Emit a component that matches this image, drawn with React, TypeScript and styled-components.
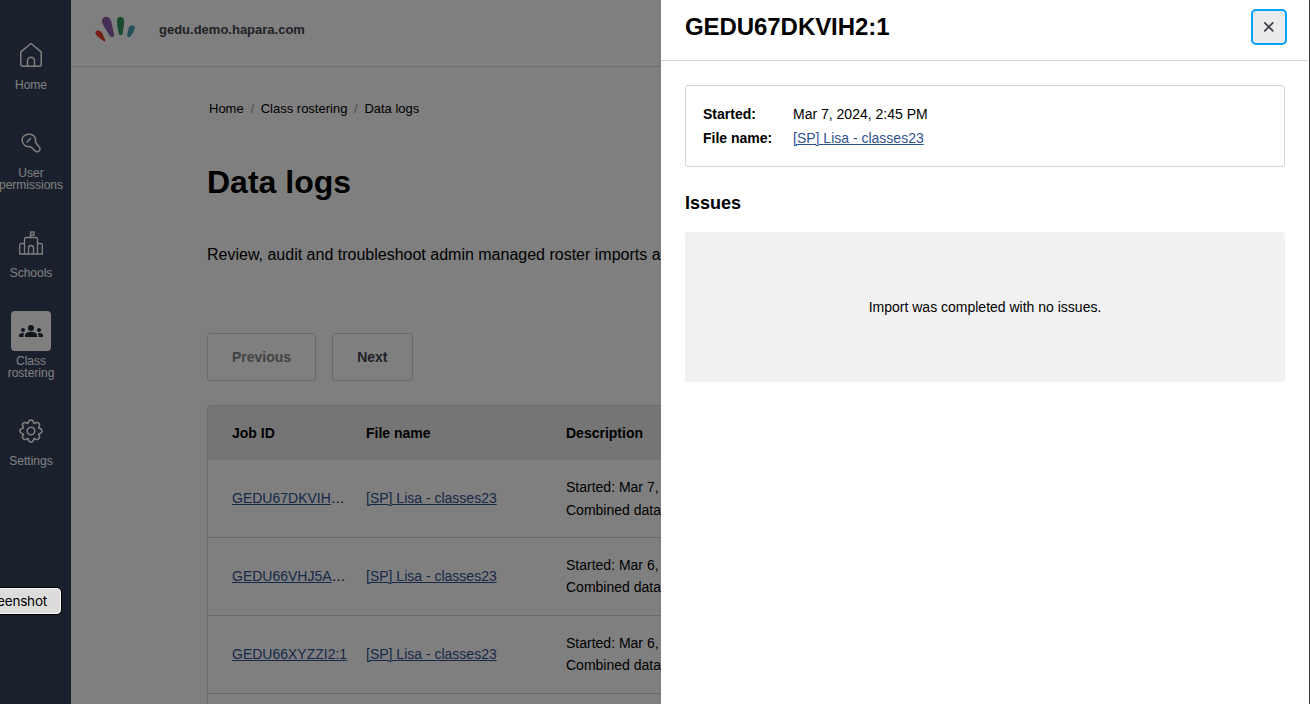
import React from "react";
import styled, { createGlobalStyle } from "styled-components";

const GlobalStyle = createGlobalStyle`
  *, *::before, *::after { box-sizing: border-box; }
  html, body { margin: 0; padding: 0; overflow: hidden; background: #fff; }
  body { font-family: "Liberation Sans", Arial, Helvetica, sans-serif; font-size: 14px; color: #000; }
  h1, h2, h3, p, ul, dl, dd { margin: 0; padding: 0; }
`;

const Page = styled.div`
  position: relative;
  display: flex;
  width: 100vw;
  height: 100vh;
  overflow: hidden;
`;

const Sidebar = styled.nav`
  flex: 0 0 80px;
  margin-left: -9px;
  padding-top: 35px;
  background: #344158;
`;

const NavItem = styled.a`
  display: flex;
  flex-direction: column;
  align-items: center;
  padding-bottom: 32px;
  color: #fff;
  font-size: 12px;
  line-height: 12px;
  text-align: center;
  text-decoration: none;
  white-space: pre-line;
`;

const NavIcon = styled.span<{ $active?: boolean }>`
  display: flex;
  align-items: center;
  justify-content: center;
  width: 40px;
  height: 40px;
  margin-bottom: 4px;
  border-radius: 4px;
  color: ${(p) => (p.$active ? "#222c38" : "#fff")};
  background: ${(p) => (p.$active ? "#fff" : "transparent")};
`;

const Main = styled.main`
  flex: 1;
  min-width: 0;
`;

const TopBar = styled.header`
  display: flex;
  align-items: center;
  height: 67px;
  padding: 0 24px 7px;
  border-bottom: 1px solid #dcdcde;
`;

const Domain = styled.span`
  margin-left: 24px;
  font-size: 13px;
  font-weight: bold;
  color: #43434f;
`;

const Content = styled.div`
  padding: 34px 0 0 136px;
  width: 1100px;
`;

const Breadcrumb = styled.ul`
  display: flex;
  list-style: none;
  padding-left: 2px;
  font-size: 13px;
  line-height: 16px;
`;

const Crumb = styled.li`
  & + &::before {
    content: "/";
    padding: 0 6.7px;
    color: #999;
  }
`;

const PageTitle = styled.h1`
  margin-top: 45px;
  font-size: 32px;
  line-height: 40px;
`;

const Intro = styled.p`
  margin-top: 41px;
  font-size: 16px;
  line-height: 24px;
  white-space: nowrap;
`;

const Pager = styled.div`
  display: flex;
  gap: 16px;
  margin-top: 66px;
`;

const PagerButton = styled.button`
  height: 48px;
  padding: 0 24px;
  border: 1px solid #d4d4d4;
  border-radius: 3px;
  background: #fff;
  color: #43434f;
  font: bold 14px "Liberation Sans", Arial, sans-serif;
  &:disabled { color: #86868c; }
`;

const Table = styled.div`
  margin-top: 24px;
  border: 1px solid #d4d4d4;
  border-radius: 3px 3px 0 0;
`;

const Row = styled.div<{ $head?: boolean }>`
  display: grid;
  grid-template-columns: 134px 200px 1fr;
  align-items: center;
  height: ${(p) => (p.$head ? "54px" : "78px")};
  padding-left: 24px;
  padding-bottom: ${(p) => (p.$head ? "0" : "1px")};
  font-weight: ${(p) => (p.$head ? "bold" : "normal")};
  background: ${(p) => (p.$head ? "#ebebeb" : "#fff")};
  border-bottom: ${(p) => (p.$head ? "0" : "1px solid #d4d4d4")};
`;

const JobCell = styled.div`
  width: 116px;
  overflow: hidden;
  text-overflow: ellipsis;
  white-space: nowrap;
  line-height: 20px;
`;

const Description = styled.div<{ $loose?: boolean }>`
  padding-top: ${(p) => (p.$loose ? "2px" : "0")};
  line-height: ${(p) => (p.$loose ? "23px" : "22px")};
`;

const Link = styled.a`
  color: #305291;
  text-decoration: underline;
  text-underline-offset: 1px;
  text-decoration-thickness: 1px;
`;

const Overlay = styled.div`
  position: absolute;
  inset: 0;
  background: rgba(0, 0, 0, 0.5);
`;

const Drawer = styled.aside`
  position: absolute;
  top: 0;
  right: 0;
  bottom: 0;
  width: 649px;
  border-right: 1px solid #38393b;
  background: #fff;
`;

const DrawerHeader = styled.header`
  display: flex;
  align-items: center;
  justify-content: space-between;
  height: 61px;
  margin-right: 1px;
  padding: 0 21px 7px 24px;
  border-bottom: 1px solid #d4d4d4;
`;

const DrawerTitle = styled.h2`
  font-size: 24px;
  line-height: 32px;
  letter-spacing: -0.07px;
`;

const CloseButton = styled.button`
  display: flex;
  align-items: center;
  justify-content: center;
  width: 36px;
  height: 36px;
  padding: 0;
  border: 2px solid #05a3fa;
  border-radius: 5px;
  background: #ebebeb;
  color: #3c3c4b;
`;

const DrawerBody = styled.div`
  padding: 24px;
`;

const Summary = styled.dl`
  display: grid;
  grid-template-columns: 90px 1fr;
  align-content: start;
  height: 82px;
  padding: 16px 17px;
  border: 1px solid #d4d4d4;
  border-radius: 3px;
  line-height: 24px;
`;

const Term = styled.dt`
  font-weight: bold;
`;

const IssuesTitle = styled.h3`
  margin: 24px 0 16px;
  font-size: 18px;
  line-height: 25px;
`;

const EmptyState = styled.div`
  display: flex;
  align-items: center;
  justify-content: center;
  height: 150px;
  border-radius: 3px;
  background: #f1f1f1;
`;

const Tooltip = styled.div`
  position: absolute;
  left: -60px;
  top: 588px;
  width: 121px;
  height: 26px;
  padding-right: 13px;
  border: 1px solid #f4f4f4;
  border-radius: 4px;
  background: #dcdcdc;
  box-shadow: 0 0 0 1px #000;
  font: 13.5px/24px Inter, sans-serif;
  letter-spacing: -0.2px;
  text-align: right;
`;

const HomeIcon = () => (
  <svg width="24" height="26" viewBox="0 0 24 26" fill="none" stroke="currentColor" strokeWidth="1.5" strokeLinejoin="round" strokeLinecap="round">
    <path d="M1.8 9.8 12 1.5l10.200 8.300v12.400q0 2-2 2H3.800q-2 0-2-2Z" />
    <path d="M8.500 24v-5.200a3.500 3.500 0 0 1 7 0V24" />
  </svg>
);

const KeyIcon = () => (
  <svg width="20" height="20" viewBox="0 0 20 20" fill="none" stroke="currentColor" strokeWidth="1.5" strokeLinejoin="round" strokeLinecap="round">
    <path d="M3 3Q5 1 8 1.200 11 1 13 3q2.200 2.500 1.400 6l4.200 5.600q1 2-.5 3.400t-3.400.4L9.400 13.500q-3.600.8-6-1.500Q1 9.800 1.200 7 1 5 3 3Z" />
    <path d="M6 9 9.400 5.600" />
  </svg>
);

const SchoolIcon = () => (
  <svg width="24" height="24" viewBox="0 0 24 24" fill="none" stroke="currentColor" strokeWidth="1.300" strokeLinejoin="round">
    <path d="M5.500 23V8q0-1.500 1.500-1.500h10q1.500 0 1.500 1.500v15" />
    <path d="M5.500 12.500H2.200q-1.500 0-1.500 1.500v9h22.600V14q0-1.500-1.500-1.500h-3.300" />
    <path d="M9.500 23v-6a2.500 2.500 0 0 1 5 0v6M11.500 6.500v-5.500h3.500v3h-3.500" />
  </svg>
);

const GroupIcon = () => (
  <svg width="24" height="24" viewBox="0 0 24 24" fill="currentColor">
    <circle cx="12" cy="9" r="3" />
    <circle cx="4" cy="11" r="2" />
    <circle cx="20" cy="11" r="2" />
    <path d="M6 18v-1.600Q6 14.600 7.800 13.700 12 11.900 16.200 13.700 18 14.600 18 16.400V18Z" />
    <path d="M0 18v-1.600q0-1.300 1.300-1.900Q3 13.800 5.100 14.100 4.500 15.200 4.500 16.400V18ZM24 18v-1.600q0-1.300-1.300-1.900-1.700-.7-3.800-.4.600 1.100.6 2.300V18Z" />
  </svg>
);

// Eight rounded teeth: the radius swings between the tooth tips and the notches.
const gearOutline = Array.from({ length: 120 }, (_, i) => {
  const angle = (i / 120) * Math.PI * 2;
  const wave = Math.cos(8 * angle);
  const radius = 9.9 + 1.35 * wave - 0.3 * Math.cos(16 * angle);
  return `${(12 + radius * Math.cos(angle)).toFixed(2)},${(12 + radius * Math.sin(angle)).toFixed(2)}`;
}).join(" ");

const GearIcon = () => (
  <svg width="24" height="24" viewBox="0 0 24 24" fill="none" stroke="currentColor" strokeWidth="1.600" strokeLinejoin="round">
    <circle cx="12" cy="12" r="3.800" />
    <polygon points={gearOutline} />
  </svg>
);

const Logo = () => (
  <svg width="40" height="28" viewBox="0 0 40 28">
    <path fill="#f03e28" d="M.8 15.500C2.500 13.600 5.500 14.300 7.200 17.200l3 6.800q.4 1.900-1.500 1.200L2.700 20.500Q-.7 17.600.8 15.500Z" />
    <path fill="#8c5fa8" d="M7.200 3.800C8.500-.6 14.500-.2 16.300 5.200l2.700 13.300q.4 2.200-1.500 2.600-1.900.2-2.900-1.600L8.200 9Q6.600 6.500 7.200 3.800Z" />
    <path fill="#329764" d="M22 4.500c.3-5 6.800-5 7 0 .2 4.500-.7 9-1.300 12.700q-.5 2-2 2t-2-2C23 13 21.800 9 22 4.500Z" />
    <path fill="#48a0b5" d="M33.500 12.500c1.300-5 7.500-3.800 6.300.3-1 3-2.500 5-4.300 7.500q-1 1.200-2.300.7t-1-2Z" />
  </svg>
);

const CloseIcon = () => (
  <svg width="12" height="12" viewBox="0 0 12 12" fill="none" stroke="currentColor" strokeWidth="1.700" strokeLinecap="round">
    <path d="m1.800 1.800 8 8M9.800 1.800l-8 8" />
  </svg>
);

const navItems = [
  { label: "Home", icon: <HomeIcon /> },
  { label: "User\npermissions", icon: <KeyIcon /> },
  { label: "Schools", icon: <SchoolIcon /> },
  { label: "Class\nrostering", icon: <GroupIcon />, active: true },
  { label: "Settings", icon: <GearIcon /> },
];

const jobs = [
  { id: "GEDU67DKVIH2:1", started: "Mar 7,", loose: true },
  { id: "GEDU66VHJ5A2:1", started: "Mar 6," },
  { id: "GEDU66XYZZI2:1", started: "Mar 6," },
];

export default function App() {
  return (
    <>
      <GlobalStyle />
      <Page>
        <Sidebar>
          {navItems.map((item) => (
            <NavItem key={item.label}>
              <NavIcon $active={item.active}>{item.icon}</NavIcon>
              {item.label}
            </NavItem>
          ))}
        </Sidebar>
        <Main>
          <TopBar>
            <Logo />
            <Domain>gedu.demo.hapara.com</Domain>
          </TopBar>
          <Content>
            <Breadcrumb>
              <Crumb>Home</Crumb>
              <Crumb>Class rostering</Crumb>
              <Crumb>Data logs</Crumb>
            </Breadcrumb>
            <PageTitle>Data logs</PageTitle>
            <Intro>Review, audit and troubleshoot admin managed roster imports a</Intro>
            <Pager>
              <PagerButton disabled>Previous</PagerButton>
              <PagerButton>Next</PagerButton>
            </Pager>
            <Table>
              <Row $head>
                <div>Job ID</div>
                <div>File name</div>
                <div>Description</div>
              </Row>
              {jobs.map((job) => (
                <Row key={job.id}>
                  <JobCell><Link>{job.id}</Link></JobCell>
                  <div><Link>[SP] Lisa - classes23</Link></div>
                  <Description $loose={job.loose}>
                    Started: {job.started}
                    <br />
                    Combined data
                  </Description>
                </Row>
              ))}
              <Row />
            </Table>
          </Content>
        </Main>
        <Overlay />
        <Drawer>
          <DrawerHeader>
            <DrawerTitle>GEDU67DKVIH2:1</DrawerTitle>
            <CloseButton aria-label="Close"><CloseIcon /></CloseButton>
          </DrawerHeader>
          <DrawerBody>
            <Summary>
              <Term>Started:</Term>
              <dd>Mar 7, 2024, 2:45 PM</dd>
              <Term>File name:</Term>
              <dd><Link>[SP] Lisa - classes23</Link></dd>
            </Summary>
            <IssuesTitle>Issues</IssuesTitle>
            <EmptyState>Import was completed with no issues.</EmptyState>
          </DrawerBody>
        </Drawer>
        <Tooltip>eenshot</Tooltip>
      </Page>
    </>
  );
}
